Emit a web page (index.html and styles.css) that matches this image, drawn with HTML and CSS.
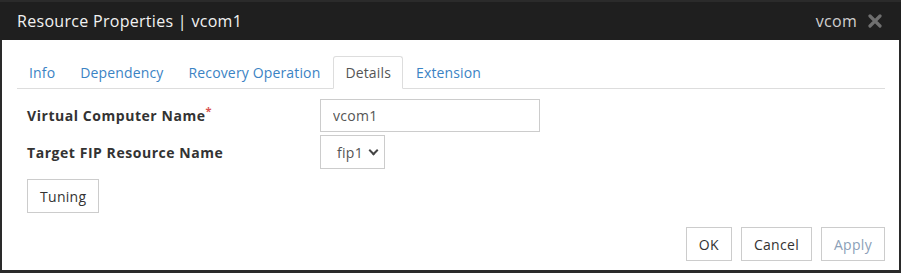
FILE: index.html
```html
<!DOCTYPE html>
<html>
<head>
    <title>Resource Properties</title>
    <link rel="stylesheet" href="styles.css">
</head>
<body>
    <div class="dialog">
        <div class="dialog-header">
            <span class="dialog-title">Resource Properties | vcom1</span>
            <span class="dialog-type">vcom</span>
            <svg class="dialog-close" width="14" height="14" viewBox="0 0 14 14">
                <path d="M2 2 L12 12 M12 2 L2 12" stroke="#6f6f6f" stroke-width="3.2" stroke-linecap="round"/>
            </svg>
        </div>

        <div class="dialog-body">
            <ul class="tabs">
                <li><a href="#">Info</a></li>
                <li><a href="#">Dependency</a></li>
                <li><a href="#">Recovery Operation</a></li>
                <li class="active"><a href="#">Details</a></li>
                <li><a href="#">Extension</a></li>
            </ul>

            <form class="props">
                <div class="row">
                    <label for="vcName">Virtual Computer Name<span class="req">*</span></label>
                    <input type="text" id="vcName" class="text-input" value="vcom1">
                </div>
                <div class="row">
                    <label for="fipName">Target FIP Resource Name</label>
                    <div class="select-box">fip1 <span class="caret"></span></div>
                </div>
                <button type="button" class="btn tuning">Tuning</button>
            </form>
        </div>

        <div class="dialog-footer">
            <button type="button" class="btn">OK</button>
            <button type="button" class="btn">Cancel</button>
            <button type="button" class="btn disabled">Apply</button>
        </div>
    </div>
</body>
</html>
```

FILE: styles.css
```css
body {
    margin: 0;
    padding: 0;
    font-family: "Open Sans", "Noto Sans", sans-serif;
    font-size: 14px;
    letter-spacing: 0.3px;
    color: #333;
    background-color: #fff;
}

.dialog {
    width: 901px;
    height: 273px;
    box-sizing: border-box;
    border: 2px solid #2a2a2a;
    border-top: 0;
    border-bottom-width: 3px;
    display: flex;
    flex-direction: column;
}

.dialog-header {
    height: 40px;
    margin: 0 -2px;
    padding: 0 19px 0 17px;
    box-sizing: border-box;
    background-color: #1f1f1f;
    border-top: 2px solid #2b2b2b;
    display: flex;
    align-items: center;
}

.dialog-title {
    flex: 1;
    color: #f2f2f2;
    font-size: 16px;
}

.dialog-type {
    color: #cfcfcf;
    font-size: 16px;
    margin-right: 11px;
}

.dialog-close {
    display: block;
}

.dialog-body {
    padding: 16px 14px 0 15px;
    flex: 1;
}

.tabs {
    list-style: none;
    margin: 0;
    padding: 0;
    display: flex;
    border-bottom: 1px solid #dddddd;
    letter-spacing: 0.15px;
}

.tabs li {
    margin-bottom: -1px;
    margin-right: 1px;
}

.tabs a {
    display: block;
    height: 31px;
    line-height: 31px;
    padding: 0 11px 0 11px;
    color: #3b83c4;
    text-decoration: none;
    border: 1px solid transparent;
    border-radius: 3px 3px 0 0;
}

.tabs li.active a {
    color: #555;
    background-color: #fff;
    border-color: #dddddd;
    border-bottom-color: #fff;
}

.props {
    padding: 10px 0 0 10px;
}

.row {
    display: flex;
    align-items: center;
    margin-bottom: 3px;
}

.row label {
    width: 293px;
    font-weight: bold;
    letter-spacing: 0.55px;
    color: #333;
}

.req {
    color: #d9534f;
    font-size: 11px;
    vertical-align: top;
    position: relative;
    top: -3px;
}

.text-input {
    width: 220px;
    height: 33px;
    box-sizing: border-box;
    border: 1px solid #cccccc;
    padding: 0 12px;
    font-family: inherit;
    font-size: 14px;
    letter-spacing: inherit;
    color: #555;
}

.select-box {
    width: 65px;
    height: 34px;
    box-sizing: border-box;
    border: 1px solid #cccccc;
    padding-left: 16px;
    display: flex;
    align-items: center;
    color: #555;
}

.caret {
    width: 5px;
    height: 5px;
    margin-left: 7px;
    margin-top: -4px;
    border-right: 2px solid #444;
    border-bottom: 2px solid #444;
    transform: rotate(45deg);
}

.btn {
    height: 34px;
    padding: 0 12px;
    background-color: #fff;
    border: 1px solid #cccccc;
    font-family: inherit;
    font-size: 14px;
    letter-spacing: inherit;
    color: #333;
    cursor: pointer;
}

.tuning {
    margin-top: 7px;
    height: 34px;
    width: 72px;
}

.btn.disabled {
    color: #8c9fb8;
}

.dialog-footer {
    display: flex;
    justify-content: flex-end;
    gap: 9px;
    padding: 0 14px 9px 0;
}
```
